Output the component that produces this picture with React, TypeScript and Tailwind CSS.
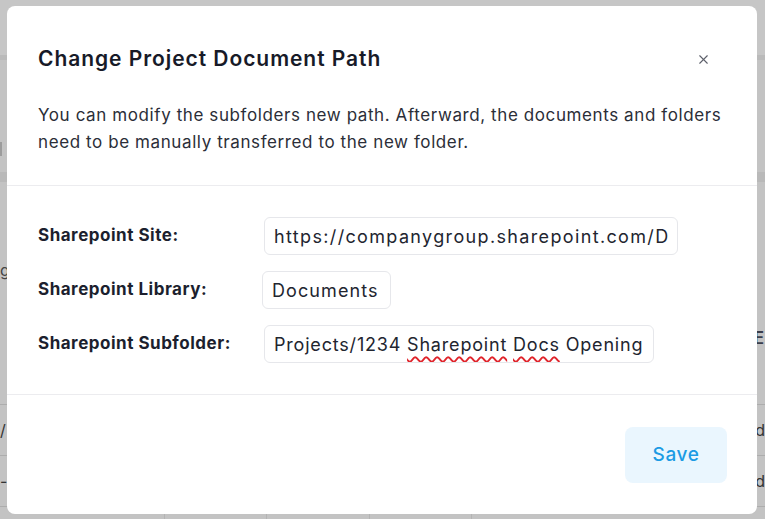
import React from 'react';
import { X } from 'lucide-react';

const font = { fontFamily: 'Inter, "Noto Sans", sans-serif' };

interface FieldRowProps {
  label: string;
  width: string;
  children: React.ReactNode;
}

const FieldRow: React.FC<FieldRowProps> = ({ label, width, children }) => (
  <div className="flex items-center">
    <span className="w-[226px] shrink-0 text-[17px] tracking-[0.03em] font-bold text-[#1c1f2e]">{label}</span>
    <div
      className={`${width} h-[38px] flex items-center px-[9px] rounded-md border border-[#e6e7eb] bg-white overflow-hidden whitespace-nowrap text-[18px] text-[#22252f]`}
    >
      {children}
    </div>
  </div>
);

const Misspelled: React.FC<{ children: React.ReactNode }> = ({ children }) => (
  <span className="underline decoration-wavy decoration-[#e0242b] decoration-[1.5px] underline-offset-[5px]">
    {children}
  </span>
);

// Table underneath the dialog, dimmed by the overlay
const BackdropPage: React.FC = () => (
  <div className="h-[519px] w-full bg-[#c3c3c3] flex flex-col overflow-hidden">
    <div className="h-[55px] bg-[#c6c6c6]" />
    <div className="h-[5px] bg-[#bababa]" />
    <div className="h-[82px]" />
    <div className="h-[14px] w-[2px] bg-[#9c9c9c]" />
    <div className="h-[16px]" />
    <div className="h-[10px] bg-[#b9b9b9]" />
    <div className="h-[150px] flex items-center pt-[26px] text-[16px] text-[#444]">
      <span>g</span>
    </div>
    <div className="h-[72px] flex justify-end items-start text-[17px] font-semibold text-[#3a3d4a] pr-[1px]">
      <span className="-mt-[6px]">E</span>
    </div>
    <div className="h-px bg-[#adadad]" />
    <div className="h-[50px] flex justify-between items-center text-[16px] text-[#333]">
      <span>/</span>
      <span>d</span>
    </div>
    <div className="h-px bg-[#adadad]" />
    <div className="h-[50px] flex justify-between items-center text-[16px] text-[#333]">
      <span>-</span>
      <span>d</span>
    </div>
    <div className="h-px bg-[#adadad]" />
    <div className="flex-1 grid grid-cols-[165px_102px_103px_102px_1fr]">
      <div className="border-r border-[#b4b4b4]" />
      <div className="border-r border-[#b4b4b4]" />
      <div className="border-r border-[#b4b4b4]" />
      <div className="border-r border-[#b4b4b4]" />
      <div />
    </div>
  </div>
);

export default function App() {
  return (
    <div className="relative w-[765px] h-[519px] overflow-hidden" style={font}>
      <BackdropPage />

      <div className="absolute left-[7px] top-[6px] w-[750px] rounded-lg bg-white flex flex-col">
        <div className="px-[31px] pt-[39px] pb-[29px] border-b border-[#ececef]">
          <div className="flex items-center justify-between">
            <h2 className="text-[21px] leading-[28px] tracking-[0.045em] font-semibold text-[#171a28]">
              Change Project Document Path
            </h2>
            <button className="mr-[15px] text-[#5d606b]">
              <X size={15} strokeWidth={1.8} />
            </button>
          </div>
          <p className="mt-[29px] text-[17px] leading-[27px] tracking-[0.035em] text-[#2b2e38]">
            You can modify the subfolders new path. Afterward, the documents and folders need to be manually
            transferred to the new folder.
          </p>
        </div>

        <div className="px-[31px] py-[31px] flex flex-col gap-[16px] border-b border-[#ececef]">
          <FieldRow label="Sharepoint Site:" width="w-[414px]">
            <span className="tracking-[0.075em]">https://companygroup.sharepoint.com/D</span>
          </FieldRow>
          <FieldRow label="Sharepoint Library:" width="w-[129px] -ml-[2px]">
            <span className="tracking-[0.06em]">Documents</span>
          </FieldRow>
          <FieldRow label="Sharepoint Subfolder:" width="w-[390px]">
            <span className="tracking-[0.045em]">
              Projects/1234&nbsp;<Misspelled>Sharepoint</Misspelled>&nbsp;<Misspelled>Docs</Misspelled>&nbsp;Opening
            </span>
          </FieldRow>
        </div>

        <div className="px-[30px] pt-[32px] pb-[31px] flex justify-end">
          <button className="w-[102px] h-[56px] rounded-lg bg-[#eaf6fe] text-[19px] tracking-[0.03em] font-medium text-[#1b9be4]">
            Save
          </button>
        </div>
      </div>
    </div>
  );
}
